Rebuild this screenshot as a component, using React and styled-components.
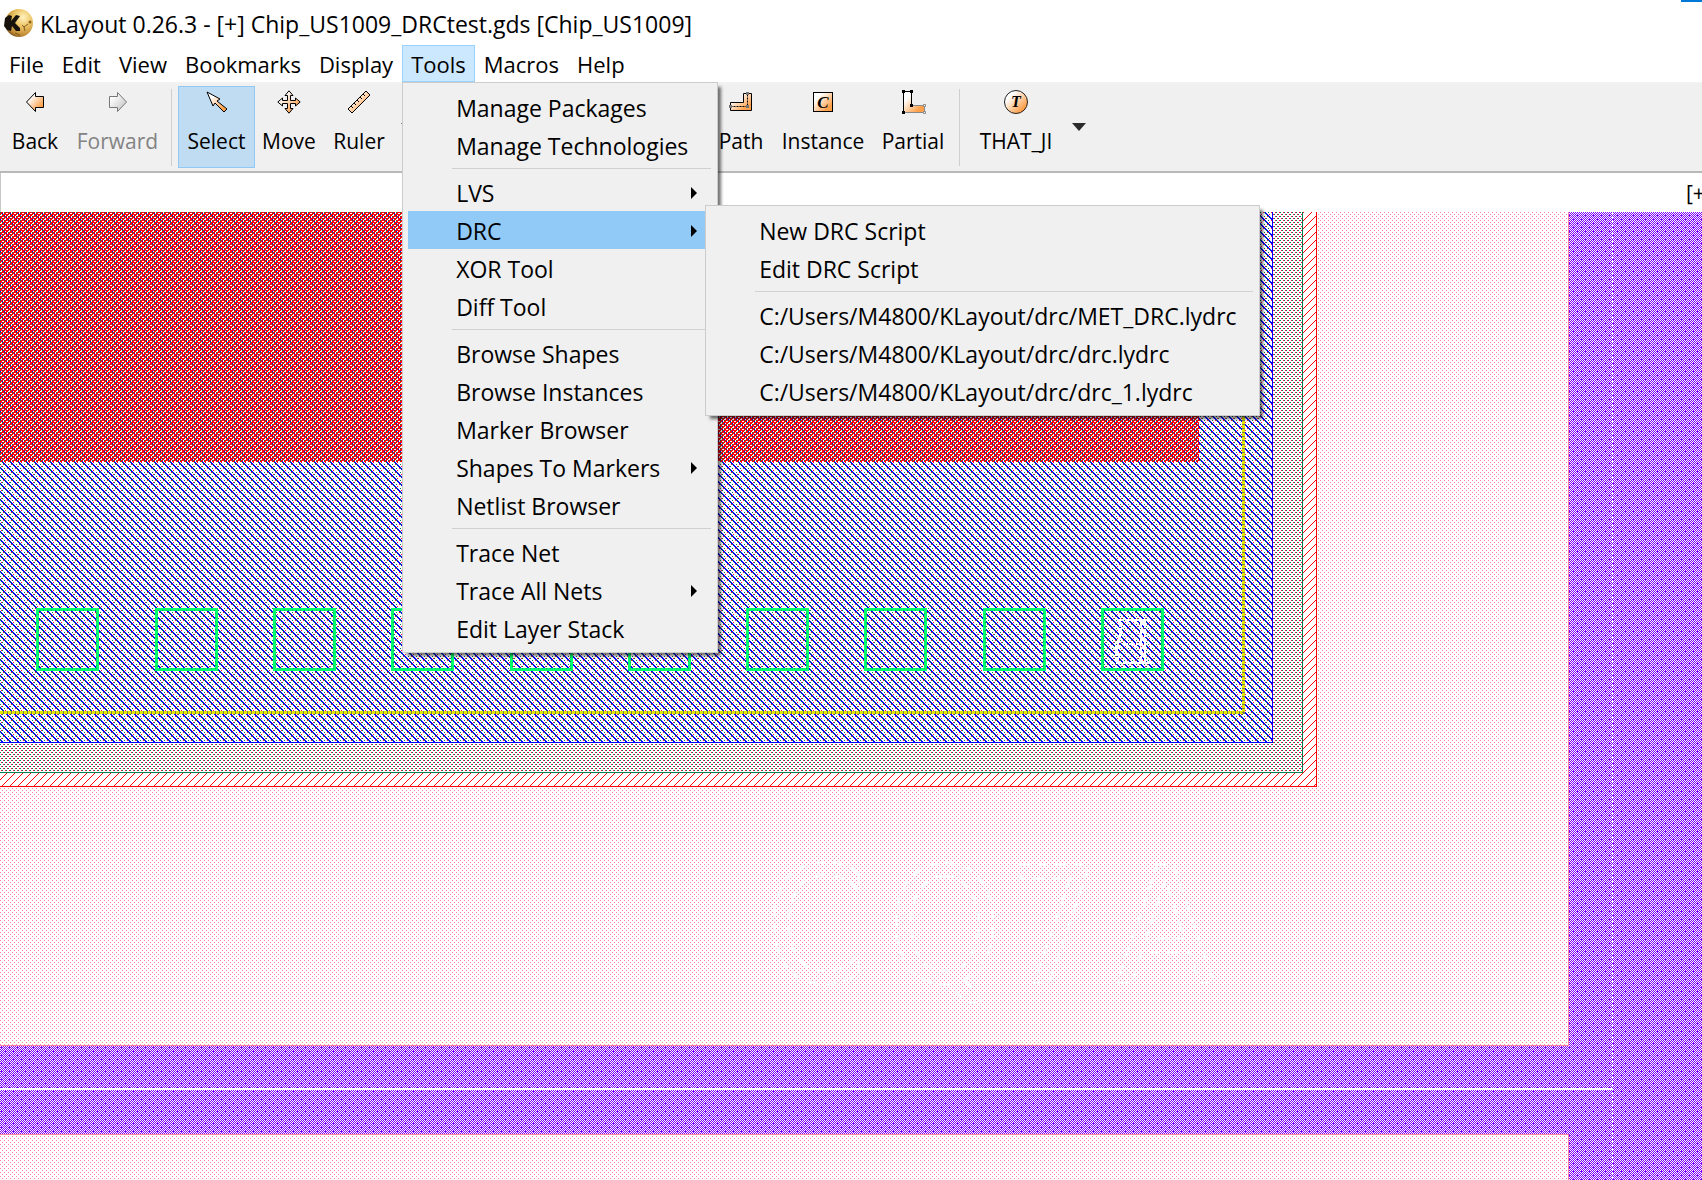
import React from 'react';
import styled, { createGlobalStyle } from 'styled-components';

const GlobalStyle = createGlobalStyle`
  * {
    box-sizing: border-box;
  }

  body {
    margin: 0;
    overflow: hidden;
    background: #fff;
    color: #000;
    font-family: 'Open Sans', 'Noto Sans', sans-serif;
    font-size: 22px;
  }

  button {
    margin: 0;
    border: 0;
    background: none;
    color: inherit;
    font: inherit;
  }
`;

const Window = styled.div`
  display: flex;
  flex-direction: column;
  height: 100vh;
`;

const TitleBar = styled.header`
  display: flex;
  align-items: center;
  gap: 6px;
  height: 45px;
  padding-left: 3px;
  border-top: 2px solid transparent;
  border-image: linear-gradient(to left, #0078d7 23px, transparent 23px) 2;
  border-width: 2px 0 0;
`;

const Title = styled.h1`
  margin: 0;
  font-size: 23px;
  font-weight: 400;
  line-height: 40px;
  white-space: nowrap;
`;

const MenuBar = styled.nav`
  display: flex;
  height: 39px;
  border-bottom: 2px solid #f2f2f2;
`;

const MenuSlot = styled.div`
  position: relative;
`;

const MenuButton = styled.button`
  height: 37px;
  padding: 0 8px;
  border: 1px solid ${(props) => (props.$open ? '#99d1ff' : 'transparent')};
  background: ${(props) => (props.$open ? '#cce8ff' : 'transparent')};
  line-height: 34px;
`;

const Menu = styled.ul`
  position: absolute;
  top: 37px;
  left: 0;
  z-index: 2;
  width: 316px;
  margin: 0;
  padding: 5px;
  border: 1px solid #ccc;
  background: #f0f0f0;
  box-shadow: 4px 4px 3px -1px rgba(0, 0, 0, 0.55);
  font-size: 23px;
  list-style: none;
`;

const SubMenu = styled(Menu)`
  top: -6px;
  left: 297px;
  width: 555px;
`;

const MenuItem = styled.li`
  position: relative;
  background: ${(props) => (props.$active ? '#91c9f7' : 'transparent')};
`;

const ItemButton = styled.button`
  display: flex;
  align-items: center;
  justify-content: space-between;
  width: 100%;
  height: 38px;
  padding: 1px 15px 0 48px;
  white-space: nowrap;
`;

const MenuLine = styled.li`
  height: 9px;
  margin: 0 1px 0 44px;
  background: linear-gradient(#d0d0d0, #d0d0d0) 0 4px / 100% 1px no-repeat;
`;

const ToolBar = styled.div`
  display: flex;
  align-items: flex-start;
  height: 89px;
  padding-top: 2px;
  border-bottom: 2px solid #b9b9b9;
  background: #f0f0f0;
`;

const ToolButton = styled.button`
  display: flex;
  flex-direction: column;
  align-items: center;
  gap: 12px;
  flex: none;
  width: ${(props) => props.$width}px;
  height: 82px;
  padding: 3px 0 0;
  border: 1px solid ${(props) => (props.$checked ? '#90c8f6' : 'transparent')};
  background: ${(props) => (props.$checked ? '#c0dcf3' : 'transparent')};
  font-size: 21px;
  line-height: 30px;
  white-space: nowrap;

  &:disabled {
    color: #838383;
  }
`;

const ToolLine = styled.span`
  flex: none;
  width: 1px;
  height: 77px;
  margin: 3px 6px 0;
  background: #cfcfcf;
`;

const DropButton = styled.button`
  display: flex;
  align-items: center;
  justify-content: center;
  flex: none;
  width: 26px;
  height: 82px;
  padding: 0;
`;

const EditTools = styled.div`
  display: flex;
  margin-left: 288px;
`;

const ViewTabs = styled.div`
  display: flex;
  justify-content: flex-end;
  height: 39px;
  border-left: 1px solid #c8c8c8;
  background: #fff;
`;

const ViewTab = styled.button`
  width: 16px;
  padding: 0;
  overflow: hidden;
  font-size: 21px;
  text-align: left;
  white-space: nowrap;
`;

const Canvas = styled.svg`
  display: block;
  flex: 1;
  width: 100%;
  min-height: 0;
  shape-rendering: crispEdges;
`;

const Icon = styled.svg`
  display: block;
  flex: none;
  overflow: visible;
`;

const toolsMenu = [
  ['Manage Packages', 'Manage Technologies'],
  ['LVS', 'DRC', 'XOR Tool', 'Diff Tool'],
  ['Browse Shapes', 'Browse Instances', 'Marker Browser', 'Shapes To Markers', 'Netlist Browser'],
  ['Trace Net', 'Trace All Nets', 'Edit Layer Stack'],
];

const drcMenu = [
  ['New DRC Script', 'Edit DRC Script'],
  [
    'C:/Users/M4800/KLayout/drc/MET_DRC.lydrc',
    'C:/Users/M4800/KLayout/drc/drc.lydrc',
    'C:/Users/M4800/KLayout/drc/drc_1.lydrc',
  ],
];

const withSubmenu = ['LVS', 'DRC', 'Shapes To Markers', 'Trace All Nets'];

// fill stipples, one character per pixel
const stipples = {
  pink: { color: '#ff80a8', rows: ['#...', '....', '..#.', '....'] },
  purple: {
    color: '#8000ff',
    rows: ['.#.#.#.#', '#.#.#.#.', '.#.#.#.#', '###.#.#.', '.#.#.#.#', '#.#.#.#.', '.#.#.#.#', '#.#.###.'],
  },
  green: { color: '#008050', rows: ['#...', '....', '..#.', '....'] },
  sparse: { color: '#008050', rows: ['#...#...', '........', '..#.....', '........'] },
  hatch: {
    color: '#ff0000',
    rows: ['.......#', '......#.', '.....#..', '....#...', '...#....', '..#.....', '.#......', '#.......'],
  },
  rose: { color: '#ff0040', rows: ['...#', '....', '.#..', '....'] },
  dots: {
    color: '#ff0040',
    rows: ['.......#', '........', '.....#..', '........', '...#....', '........', '.#......', '........'],
  },
  blue: {
    color: '#0000ff',
    rows: ['##......', '.##.....', '..##....', '...##...', '....##..', '.....##.', '......##', '#......#'],
  },
  red: { color: '#ff0000', rows: ['###.', '##..', '#.##', '..##'] },
};

const Stipple = ({ id, color, rows }) => (
  <pattern id={id} width={rows[0].length} height={rows.length} patternUnits="userSpaceOnUse">
    {rows.map((row, y) =>
      [...row].map((c, x) => c === '#' && <rect key={`${x}-${y}`} x={x} y={y} width="1" height="1" fill={color} />)
    )}
  </pattern>
);

const pads = [36, 155, 273, 391, 510, 628, 746, 864, 983, 1101];

const LayoutView = () => (
  <Canvas aria-label="Chip_US1009">
    <defs>
      {Object.entries(stipples).map(([id, s]) => (
        <Stipple key={id} id={id} {...s} />
      ))}
    </defs>

    <rect width="100%" height="100%" fill="url(#purple)" />
    <path d="M1612.5 0V2000" stroke="#fff" strokeDasharray="3 1" />
    <path d="M0 877H1613" stroke="#fff" strokeWidth="2" />

    <rect x="-1" y="-1" width="1569" height="834" fill="#fff" />
    <rect x="-1" y="-1" width="1569" height="834" fill="url(#pink)" />
    <path d="M1568.5 0V833.5H0" fill="none" stroke="#ff80a0" />
    <rect x="0" y="922" width="1568" height="1000" fill="#fff" />
    <rect x="0" y="922" width="1568" height="1000" fill="url(#pink)" />
    <path d="M0 922.5H1568.5V2000" fill="none" stroke="#ff80a0" />

    <rect width="1316" height="574" fill="#fff" />
    <path d="M1302 0H1316V574H0V560H1302Z" fill="url(#hatch)" />
    <path d="M1316.5 0V574.5H0" fill="none" stroke="#f00" />
    <path d="M1302 0V560H0V530H1272V0Z" fill="url(#rose)" />
    <path d="M1302 0V560H0V530H1272V0Z" fill="url(#green)" />
    <path d="M1302.5 0V560.5H0" fill="none" stroke="#008050" />

    <rect width="1272" height="530" fill="url(#dots)" />
    <rect width="1272" height="530" fill="url(#blue)" />
    <rect width="1272" height="530" fill="url(#sparse)" />
    <path d="M1272.5 0V530.5H0" fill="none" stroke="#00f" />
    <rect width="1199" height="250" fill="url(#red)" />
    <rect width="1199" height="250" fill="url(#sparse)" />

    <path d="M1243.5 0V500.5H0" fill="none" stroke="#e0e800" strokeWidth="3" />
    <path d="M1243.5 0V500.5H0" fill="none" stroke="#7c7c50" strokeWidth="3" strokeDasharray="1 3" />

    {pads.map((x) => (
      <g key={x} fill="none">
        <rect x={x + 1.5} y="397.5" width="60" height="60" stroke="#00ff6a" strokeWidth="3" />
        <rect x={x + 2.5} y="398.5" width="58" height="58" stroke="#10a060" strokeDasharray="1 3" />
      </g>
    ))}

    <g fill="none" stroke="#fff">
      <path d="M1118 407.5H1151M1116 450.5H1151M1122 431.5H1142" strokeWidth="2" strokeDasharray="6 1" />
      <path d="M1141 408V450M1145 408V450" strokeWidth="2" strokeDasharray="8 1" />
      <path d="M1120 410V424L1116 438L1118 450" strokeWidth="3" strokeDasharray="5 1" />
    </g>

    <g
      fill="none"
      stroke="#fff"
      strokeWidth="2"
      strokeDasharray="10 8"
      fontFamily="'DejaVu Sans Condensed', Roboto, sans-serif"
      fontSize="160"
    >
      <text x="766" y="770">C</text>
      <text x="888" y="770">Q</text>
      <text x="1008" y="770">7</text>
      <text x="1116" y="770">A</text>
    </g>
  </Canvas>
);

const Logo = () => (
  <Icon width="31" height="29" viewBox="0 0 31 29" aria-hidden="true">
    <defs>
      <radialGradient id="gold" cx="0.65" cy="0.3" r="0.8">
        <stop offset="0" stopColor="#fff3c0" />
        <stop offset="0.4" stopColor="#edc566" />
        <stop offset="0.8" stopColor="#c08a35" />
        <stop offset="1" stopColor="#5f3e10" />
      </radialGradient>
    </defs>
    <circle cx="16" cy="14" r="14" fill="url(#gold)" />
    <path d="M2 9L6 6L9 7L8 12L13 6L17 7L12 14L17 19L17 22L13 22L9 17L8 22L4 21L1 17Z" fill="#17120b" />
    <path d="M19 16L21 18L25 15M21 18L22 22M12 24L17 26" fill="none" stroke="#80591c" />
    <circle cx="27" cy="13" r="1.5" fill="#8b601b" />
  </Icon>
);

const ToolIcon = ({ name }) => (
  <Icon width="24" height="24" viewBox="0 0 24 24" strokeWidth="1" aria-hidden="true">
    {name === 'back' && <path d="M3.5 12L12.5 2.5V6.5H20.5V17.5H12.5V21.5Z" fill="url(#orange)" stroke="#000" />}
    {name === 'forward' && <path d="M20.5 12L11.5 2.5V6.5H3.5V17.5H11.5V21.5Z" fill="url(#grey)" stroke="#777" />}
    {name === 'select' && <path d="M2 2L15 9L12 11L22 19L19 22L10 13L8 16Z" fill="url(#orange)" stroke="#000" />}
    {name === 'move' && (
      <path
        d="M12 .8L16 5.5H13.5V10.5H18.5V8L23.2 12L18.5 16V13.5H13.5V18.5H16L12 23.2L8 18.5H10.5V13.5H5.5V16L.8 12L5.5 8V10.5H10.5V5.5H8Z"
        fill="url(#orange)"
        stroke="#000"
      />
    )}
    {name === 'ruler' && (
      <>
        <path d="M1 19L19 1L23 5L5 23Z" fill="url(#orange)" stroke="#000" />
        <path d="M4 16L6 18M7 13L9 15M10 10L12 12M13 7L15 9M16 4L18 6" stroke="#000" />
      </>
    )}
    {name === 'path' && (
      <>
        <path d="M1.5 12.5H14.5V3.5H22.5V20.5H1.5Z" fill="url(#orange)" stroke="#000" />
        <path d="M1.5 16.5H18.5V3.5" fill="none" stroke="#000" strokeDasharray="2 1" />
        <path d="M0 15h3v3H0zM17 15h3v3h-3zM17 2h3v3h-3z" fill="#777" />
      </>
    )}
    {name === 'instance' && (
      <>
        <rect x="2.5" y="2.5" width="19" height="19" fill="url(#orange)" stroke="#000" />
        <text x="12" y="18" textAnchor="middle" fontFamily="'Liberation Serif', serif" fontSize="17" fontWeight="700" fontStyle="italic">
          C
        </text>
      </>
    )}
    {name === 'partial' && (
      <>
        <path d="M2.5 1.5H10.5V15.5H23.5V22.5H2.5Z" fill="url(#orange)" stroke="#888" />
        <path d="M10.5 15.5V1.5H2.5V22.5" fill="none" stroke="#000" />
        <path d="M1 0h3v3H1zM9 0h3v3H9zM9 14h3v3H9zM1 21h3v3H1z" />
        <path d="M22.5 14.5h2v2h-2zM22.5 21.5h2v2h-2z" fill="#fff" stroke="#888" />
      </>
    )}
    {name === 'that' && (
      <>
        <circle cx="12" cy="12" r="11.5" fill="url(#orange)" stroke="#222" />
        <text x="12" y="17" textAnchor="middle" fontFamily="'Liberation Serif', serif" fontSize="16" fontWeight="700" fontStyle="italic">
          T
        </text>
      </>
    )}
  </Icon>
);

const IconPaints = () => (
  <Icon width="0" height="0" aria-hidden="true">
    <defs>
      <linearGradient id="orange" x1="0" y1="0" x2="1" y2="1">
        <stop offset="0.25" stopColor="#fff" />
        <stop offset="0.8" stopColor="#ffa04a" />
      </linearGradient>
      <linearGradient id="grey" x1="0" y1="0" x2="1" y2="1">
        <stop offset="0.2" stopColor="#fff" />
        <stop offset="1" stopColor="#bbb" />
      </linearGradient>
    </defs>
  </Icon>
);

const Tool = ({ name, label, ...rest }) => (
  <ToolButton type="button" {...rest}>
    <ToolIcon name={name} />
    {label}
  </ToolButton>
);

const DropArrow = ({ label }) => (
  <DropButton type="button" aria-label={label}>
    <Icon width="14" height="8" viewBox="0 0 14 8">
      <path d="M0 0H14L7 8Z" fill="#2b2b2b" />
    </Icon>
  </DropButton>
);

const MenuGroups = ({ groups, open, children }) =>
  groups.map((items, i) => (
    <React.Fragment key={items[0]}>
      {i > 0 && <MenuLine role="separator" />}
      {items.map((item) => (
        <MenuItem key={item} $active={item === open}>
          <ItemButton type="button">
            {item}
            {withSubmenu.includes(item) && (
              <Icon width="6" height="12" viewBox="0 0 6 12">
                <path d="M0 0L6 6L0 12Z" />
              </Icon>
            )}
          </ItemButton>
          {item === open && children}
        </MenuItem>
      ))}
    </React.Fragment>
  ));

const App = () => (
  <Window>
    <GlobalStyle />
    <IconPaints />
    <TitleBar>
      <Logo />
      <Title>KLayout 0.26.3 - [+] Chip_US1009_DRCtest.gds [Chip_US1009]</Title>
    </TitleBar>

    <MenuBar>
      {['File', 'Edit', 'View', 'Bookmarks', 'Display', 'Tools', 'Macros', 'Help'].map((name) => (
        <MenuSlot key={name}>
          <MenuButton type="button" $open={name === 'Tools'}>
            {name}
          </MenuButton>
          {name === 'Tools' && (
            <Menu>
              <MenuGroups groups={toolsMenu} open="DRC">
                <SubMenu>
                  <MenuGroups groups={drcMenu} />
                </SubMenu>
              </MenuGroups>
            </Menu>
          )}
        </MenuSlot>
      ))}
    </MenuBar>

    <ToolBar>
      <Tool name="back" label="Back" $width={70} />
      <Tool name="forward" label="Forward" $width={95} disabled />
      <ToolLine />
      <Tool name="select" label="Select" $width={77} $checked />
      <Tool name="move" label="Move" $width={68} />
      <Tool name="ruler" label="Ruler" $width={72} />
      <DropArrow label="Ruler templates" />
      <EditTools>
        <Tool name="path" label="Path" $width={64} />
        <Tool name="instance" label="Instance" $width={100} />
        <Tool name="partial" label="Partial" $width={80} />
      </EditTools>
      <ToolLine />
      <Tool name="that" label="THAT_JI" $width={100} />
      <DropArrow label="More tools" />
    </ToolBar>

    <ViewTabs>
      <ViewTab type="button">[+]</ViewTab>
    </ViewTabs>
    <LayoutView />
  </Window>
);

export default App;
